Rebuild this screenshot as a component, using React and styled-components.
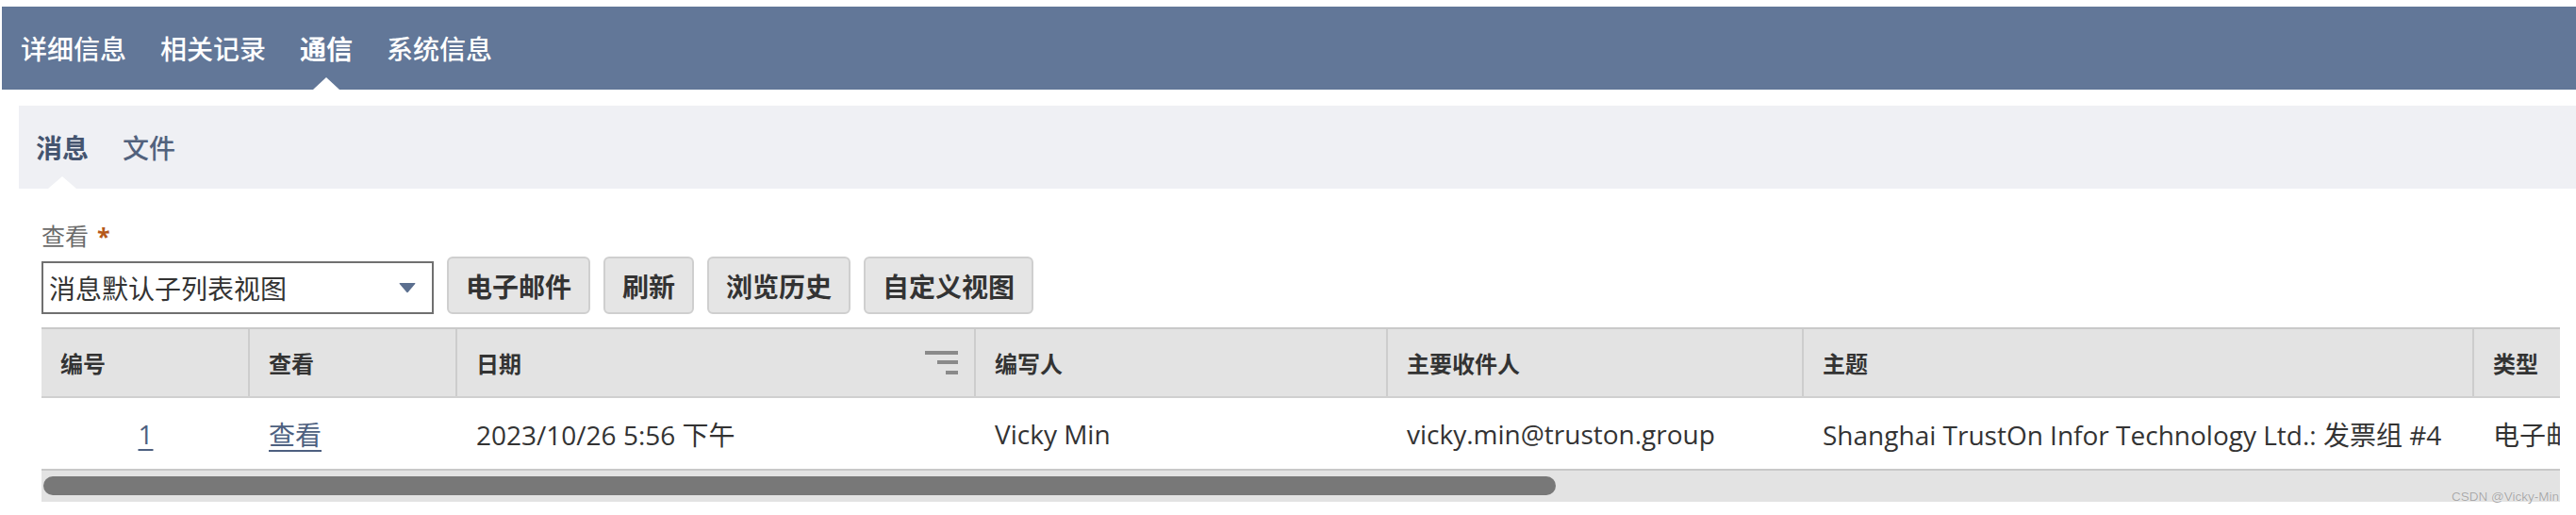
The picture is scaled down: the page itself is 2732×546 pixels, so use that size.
import React from "react";
import styled, { createGlobalStyle, css } from "styled-components";

const GlobalStyle = createGlobalStyle`
  html, body {
    margin: 0;
    padding: 0;
    background: #fff;
  }
  body {
    font-family: "Open Sans", "Noto Sans CJK SC", sans-serif;
    color: #333;
  }
`;

const Page = styled.div`
  position: relative;
  width: 2732px;
  height: 546px;
  padding-top: 7px;
  box-sizing: border-box;
  overflow: hidden;
`;

// top record tabs
const TopNav = styled.nav`
  display: flex;
  align-items: center;
  gap: 36px;
  height: 88px;
  margin-left: 2px;
  padding-left: 20px;
  background: #627798;
`;

const pointer = (w, h) => css`
  &::after {
    content: "";
    position: absolute;
    left: 50%;
    bottom: 0;
    transform: translateX(-50%);
    border-left: ${w / 2}px solid transparent;
    border-right: ${w / 2}px solid transparent;
    border-bottom: ${h}px solid #fff;
  }
`;

const NavTab = styled.div`
  position: relative;
  height: 100%;
  display: flex;
  align-items: center;
  font-family: "Noto Sans CJK SC", sans-serif;
  font-size: 28px;
  font-weight: ${(p) => (p.$active ? 700 : 500)};
  color: #fff;
  ${(p) => p.$active && pointer(28, 13)}
`;

const SubNav = styled.nav`
  display: flex;
  align-items: center;
  gap: 36px;
  height: 88px;
  margin: 17px 0 0 20px;
  padding-left: 18px;
  background: #eff0f4;
`;

const SubTab = styled.div`
  position: relative;
  height: 100%;
  display: flex;
  align-items: center;
  font-family: "Noto Sans CJK SC", sans-serif;
  font-size: 28px;
  font-weight: ${(p) => (p.$active ? 700 : 500)};
  color: ${(p) => (p.$active ? "#44546f" : "#52627d")};
  ${(p) => p.$active && pointer(30, 13)}
`;

// form + list
const Body = styled.div`
  margin: 0 17px 0 44px;
`;

const FieldLabel = styled.div`
  margin-top: 35px;
  height: 30px;
  line-height: 30px;
  font-size: 25px;
  color: #6b6b6b;
`;

const Required = styled.span`
  margin-left: 9px;
  font-weight: 700;
  color: #b5581a;
`;

const Controls = styled.div`
  display: flex;
  align-items: flex-end;
  gap: 14px;
  margin-top: 7px;
`;

const Select = styled.div`
  box-sizing: border-box;
  width: 416px;
  height: 56px;
  display: flex;
  align-items: center;
  justify-content: space-between;
  padding: 0 17px 0 6px;
  border: 2px solid #707070;
  background: #fff;
  font-size: 28px;
  color: #333;
`;

const Button = styled.button`
  box-sizing: border-box;
  height: 61px;
  padding: 0 18px;
  border: 2px solid #cfcfcf;
  border-radius: 6px;
  background: #e5e5e5;
  font-family: "Open Sans", "Noto Sans CJK SC", sans-serif;
  font-size: 28px;
  font-weight: 700;
  color: #333;
`;

const Table = styled.div`
  position: relative;
  margin-top: 14px;
  overflow: hidden;
`;

const HeaderRow = styled.div`
  display: flex;
  height: 71px;
  border-top: 2px solid #c9c9c9;
  border-bottom: 2px solid #d0d0d0;
  background: #e3e3e3;
  box-shadow: 0 2px 3px rgba(0, 0, 0, 0.06);
`;

const HeadCell = styled.div`
  flex: none;
  box-sizing: border-box;
  width: ${(p) => p.$w}px;
  display: flex;
  align-items: center;
  justify-content: space-between;
  padding: 0 17px 0 20px;
  border-right: 2px solid #cdcdcd;
  font-size: 24px;
  font-weight: 700;
  color: #333;
  white-space: nowrap;
`;

const DataRow = styled.div`
  display: flex;
  height: 75px;
  background: #fff;
`;

const Cell = styled.div`
  flex: none;
  box-sizing: border-box;
  width: ${(p) => p.$w}px;
  display: flex;
  align-items: center;
  justify-content: ${(p) => (p.$center ? "center" : "flex-start")};
  padding-left: ${(p) => (p.$center ? 0 : 20)}px;
  font-size: 28px;
  color: #333;
  white-space: nowrap;
`;

const Link = styled.a`
  color: #4d6080;
  text-decoration: underline;
  text-decoration-thickness: 2px;
  text-underline-offset: 5px;
`;

const ScrollTrack = styled.div`
  box-sizing: border-box;
  height: 35px;
  padding: 6px 0 0 2px;
  border-top: 2px solid #c8c8c8;
  background: #e3e3e3;
`;

const Thumb = styled.div`
  width: 1604px;
  height: 20px;
  border-radius: 10px;
  background: #787878;
`;

const Watermark = styled.div`
  position: absolute;
  right: 18px;
  bottom: 12px;
  font-family: "Liberation Sans", Arial, sans-serif;
  font-size: 13.5px;
  color: #a9a9a9;
  text-shadow: 0 0 1px #fff;
`;

const SortIcon = () => (
  <svg width="35" height="25" viewBox="0 0 35 25">
    <rect x="0" y="0" width="35" height="4" fill="#8a8a8a" />
    <rect x="13" y="10" width="22" height="4" fill="#8a8a8a" />
    <rect x="22" y="21" width="13" height="4" fill="#8a8a8a" />
  </svg>
);

const Caret = () => (
  <svg width="18" height="11" viewBox="0 0 18 11">
    <path d="M1.2 0 H16.8 Q18 0 17.2 1.1 L10 9.6 Q9 10.7 8 9.6 L0.8 1.1 Q0 0 1.2 0Z" fill="#5b6f8f" />
  </svg>
);

const columns = [
  { key: "no", title: "编号", w: 221 },
  { key: "view", title: "查看", w: 220 },
  { key: "date", title: "日期", w: 550, sort: true },
  { key: "author", title: "编写人", w: 437 },
  { key: "to", title: "主要收件人", w: 441 },
  { key: "subject", title: "主题", w: 711 },
  { key: "type", title: "类型", w: 220 },
];

const row = {
  date: "2023/10/26 5:56 下午",
  author: "Vicky Min",
  to: "vicky.min@truston.group",
  subject: "Shanghai TrustOn Infor Technology Ltd.: 发票组 #4",
  type: "电子邮件",
};

export default function App() {
  return (
    <Page>
      <GlobalStyle />
      <TopNav>
        <NavTab>详细信息</NavTab>
        <NavTab>相关记录</NavTab>
        <NavTab $active>通信</NavTab>
        <NavTab>系统信息</NavTab>
      </TopNav>
      <SubNav>
        <SubTab $active>消息</SubTab>
        <SubTab>文件</SubTab>
      </SubNav>
      <Body>
        <FieldLabel>
          查看<Required>*</Required>
        </FieldLabel>
        <Controls>
          <Select>
            <span>消息默认子列表视图</span>
            <Caret />
          </Select>
          <Button>电子邮件</Button>
          <Button>刷新</Button>
          <Button>浏览历史</Button>
          <Button>自定义视图</Button>
        </Controls>
        <Table>
          <HeaderRow>
            {columns.map((c) => (
              <HeadCell key={c.key} $w={c.w}>
                {c.title}
                {c.sort && <SortIcon />}
              </HeadCell>
            ))}
          </HeaderRow>
          <DataRow>
            <Cell $w={221} $center>
              <Link>1</Link>
            </Cell>
            <Cell $w={220}>
              <Link>查看</Link>
            </Cell>
            <Cell $w={550}>{row.date}</Cell>
            <Cell $w={437}>{row.author}</Cell>
            <Cell $w={441}>{row.to}</Cell>
            <Cell $w={711}>{row.subject}</Cell>
            <Cell $w={220}>{row.type}</Cell>
          </DataRow>
          <ScrollTrack>
            <Thumb />
          </ScrollTrack>
        </Table>
      </Body>
      <Watermark>CSDN @Vicky-Min</Watermark>
    </Page>
  );
}
